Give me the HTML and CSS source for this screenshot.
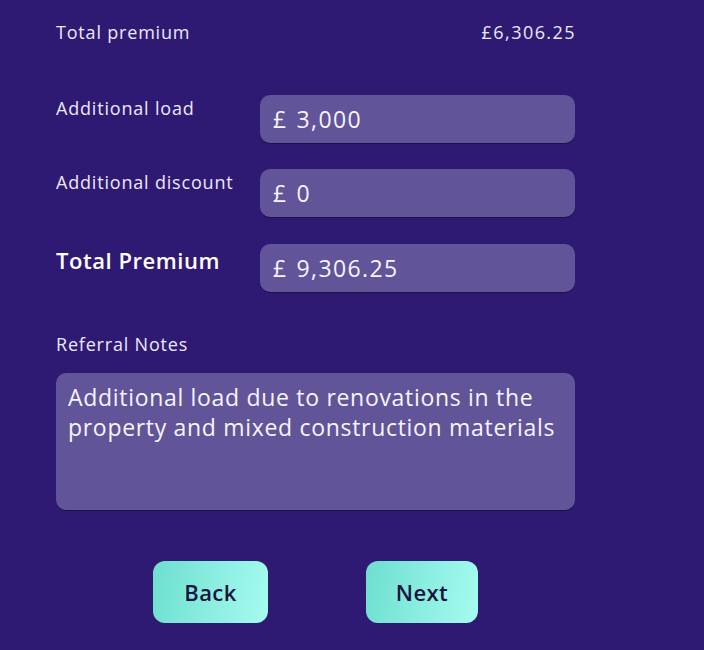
FILE: index.html
```html
<!DOCTYPE html>
<html>
<head>
<meta charset="utf-8">
<link rel="stylesheet" href="styles.css">
</head>
<body>
<div class="page">
  <div class="summary">
    <span class="label">Total premium</span>
    <span class="amount">£6,306.25</span>
  </div>
  <div class="fields">
    <div class="row">
      <span class="label">Additional load</span>
      <div class="field"><span class="cur">£</span><span>3,000</span></div>
    </div>
    <div class="row">
      <span class="label">Additional discount</span>
      <div class="field"><span class="cur">£</span><span>0</span></div>
    </div>
    <div class="row row-total">
      <span class="label strong">Total Premium</span>
      <div class="field"><span class="cur">£</span><span>9,306.25</span></div>
    </div>
  </div>
  <div class="notes">
    <span class="label">Referral Notes</span>
    <div class="notes-box">Additional load due to renovations in the property and mixed construction materials</div>
  </div>
  <div class="actions">
    <button class="btn btn-back">Back</button>
    <button class="btn btn-next">Next</button>
  </div>
</div>
</body>
</html>
```
FILE: styles.css
```css
html, body {
  margin: 0;
  padding: 0;
  background: #2f1a73;
}
body {
  font-family: "Open Sans", "Lato", sans-serif;
  color: #f3f0ff;
  width: 704px;
  height: 650px;
  overflow: hidden;
  letter-spacing: 0.03em;
}
.page {
  padding: 20px 0 0 56px;
  width: 519px;
  display: flex;
  flex-direction: column;
}
.label {
  font-size: 18px;
  line-height: 24px;
  letter-spacing: 0.045em;
  color: #ece8f8;
}
.label.strong {
  font-size: 22px;
  font-weight: 600;
  color: #ffffff;
  line-height: 30px;
  letter-spacing: 0.025em;
}
.summary {
  display: flex;
  justify-content: space-between;
  align-items: center;
  height: 24px;
}
.amount {
  font-size: 18px;
  letter-spacing: 0.08em;
  margin-right: -1px;
  color: #ece8f8;
}
.fields {
  margin-top: 51px;
  display: flex;
  flex-direction: column;
  gap: 26px;
}
.row {
  display: flex;
  align-items: flex-start;
}
.row-total {
  margin-top: 1px;
}
.row .label {
  width: 204px;
  padding-top: 1px;
  white-space: nowrap;
}
.row .label.strong {
  padding-top: 1px;
}
.field {
  flex: 1;
  height: 48px;
  box-sizing: border-box;
  background: #625499;
  border-radius: 10px;
  box-shadow: 0 1px 0 #1b1146;
  display: flex;
  align-items: center;
  padding: 0 13px;
  gap: 9px;
  font-size: 23px;
  letter-spacing: 0.06em;
  color: #f6f4ff;
}
.notes {
  margin-top: 40px;
  display: flex;
  flex-direction: column;
  gap: 17px;
}
.notes-box {
  height: 137px;
  box-sizing: border-box;
  background: #625499;
  border-radius: 10px;
  box-shadow: 0 1px 0 #1b1146;
  padding: 9px 12px;
  font-size: 23px;
  line-height: 30px;
  letter-spacing: 0.03em;
  color: #f6f4ff;
}
.actions {
  margin-top: 51px;
  display: flex;
  padding-left: 97px;
  gap: 98px;
}
.btn {
  font-family: inherit;
  letter-spacing: 0.02em;
  height: 62px;
  border: none;
  border-radius: 12px;
  background: linear-gradient(100deg, #6ddfcf 0%, #a6fbf0 100%);
  color: #1a1440;
  font-size: 22px;
  font-weight: 600;
  padding: 0;
}
.btn-back {
  width: 115px;
}
.btn-next {
  width: 112px;
}
```
